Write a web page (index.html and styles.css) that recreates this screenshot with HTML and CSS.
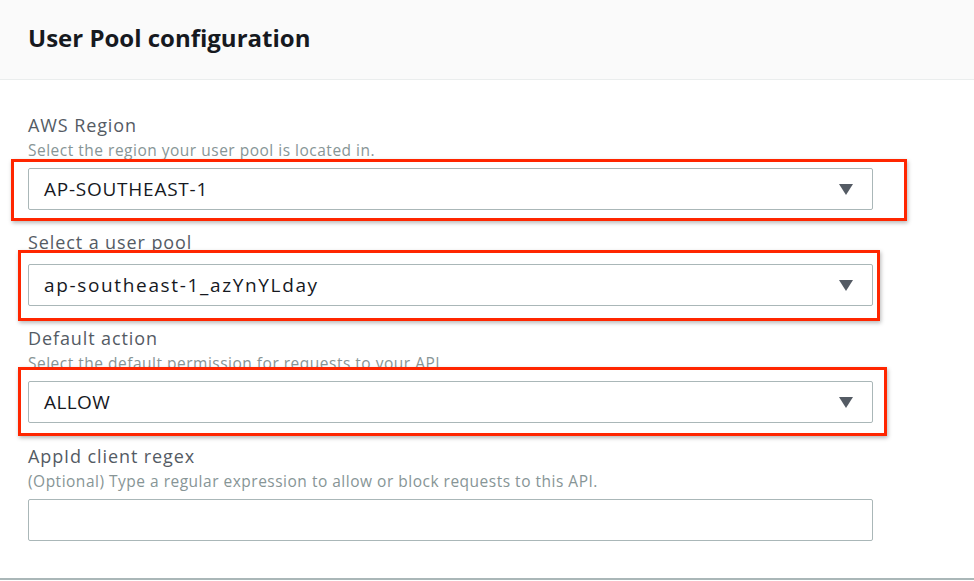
FILE: index.html
```html
<!DOCTYPE html>
<html lang="en">
<head>
<meta charset="utf-8">
<title>User Pool configuration</title>
<link rel="stylesheet" href="styles.css">
</head>
<body>
<div class="panel">
  <header class="panel-header">
    <h2 class="panel-title">User Pool configuration</h2>
  </header>
  <section class="panel-body">
    <div class="field field-region">
      <div class="field-label">AWS Region</div>
      <div class="field-help">Select the region your user pool is located in.</div>
      <div class="highlight hl-1">
        <div class="select">
          <span class="select-value select-upper">AP-SOUTHEAST-1</span>
          <svg class="caret" width="14" height="11" viewBox="0 0 14 11"><path d="M0 0H14L7 11Z" fill="#545b64"/></svg>
        </div>
      </div>
    </div>
    <div class="field field-pool">
      <div class="field-label">Select a user pool</div>
      <div class="highlight hl-2">
        <div class="select">
          <span class="select-value select-lower">ap-southeast-1_azYnYLday</span>
          <svg class="caret" width="14" height="11" viewBox="0 0 14 11"><path d="M0 0H14L7 11Z" fill="#545b64"/></svg>
        </div>
      </div>
    </div>
    <div class="field field-action">
      <div class="field-label">Default action</div>
      <div class="field-help">Select the default permission for requests to your API.</div>
      <div class="highlight hl-3">
        <div class="select">
          <span class="select-value">ALLOW</span>
          <svg class="caret" width="14" height="11" viewBox="0 0 14 11"><path d="M0 0H14L7 11Z" fill="#545b64"/></svg>
        </div>
      </div>
    </div>
    <div class="field field-regex">
      <div class="field-label">AppId client regex</div>
      <div class="field-help">(Optional) Type a regular expression to allow or block requests to this API.</div>
      <div class="text-input"></div>
    </div>
  </section>
</div>
</body>
</html>
```
FILE: styles.css
```css
* { box-sizing: border-box; }
html, body { margin: 0; padding: 0; background: #ffffff; }
body {
  font-family: "Open Sans", "Liberation Sans", sans-serif;
  color: #16191f;
  width: 974px;
  height: 581px;
  overflow: hidden;
}
.panel { width: 974px; }
.panel-header {
  height: 80px;
  background: #fafafa;
  border-bottom: 1px solid #eaeded;
  padding: 21px 28px 0;
}
.panel-title {
  margin: 0;
  font-size: 24px;
  line-height: 34px;
  font-weight: 700;
  color: #16191f;
}
.panel-body {
  padding: 33px 101px 0 28px;
  height: 500px;
  border-bottom: 2px solid #aab7b8;
}
.field { margin-bottom: 20px; }
.field-regex { margin-top: 21px; }
.field-label {
  font-size: 18px;
  line-height: 24px;
  letter-spacing: 0.9px;
  color: #545b64;
}
.field-help {
  margin-top: 3px;
  margin-bottom: 8px;
  font-size: 15.5px;
  line-height: 20px;
  letter-spacing: 0.5px;
  color: #879596;
}
.field-pool .field-label { margin-bottom: 10px; }
.select, .text-input {
  height: 42px;
  border: 1px solid #aab7b8;
  border-radius: 2px;
  background: #fff;
}
.select {
  display: flex;
  align-items: center;
  justify-content: space-between;
  padding: 0 19px 0 15px;
  font-size: 19px;
  letter-spacing: 0.4px;
  color: #16191f;
}
.select-upper { letter-spacing: 0.75px; }
.select-lower { letter-spacing: 1.65px; }
.caret { display: block; }
.highlight {
  position: relative;
  background: #fff;
  border: 3px solid #ff2600;
  box-shadow: 1px 2px 4px rgba(0, 0, 0, 0.28);
}
.hl-1 { margin: -9px -34px -11px -17px; padding: 6px 31px 8px 14px; }
.hl-2 { margin: -14px -7px -15px -10px; padding: 11px 4px 12px 7px; }
.hl-3 { margin: -14px -14px -13px -10px; padding: 11px 11px 10px 7px; }
```
